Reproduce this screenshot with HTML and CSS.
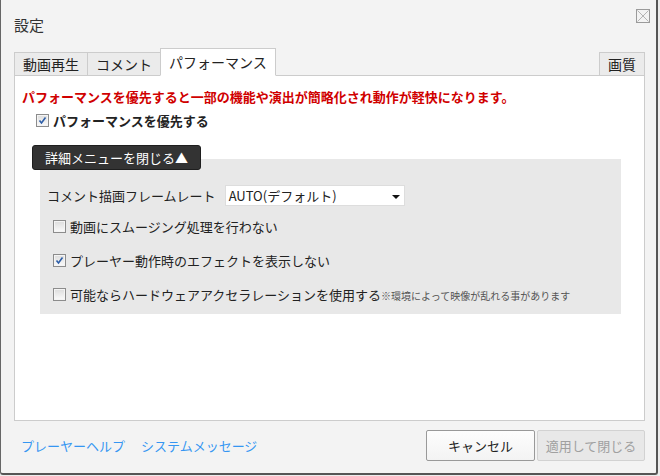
FILE: index.html
```html
<!DOCTYPE html>
<html lang="ja">
<head>
<meta charset="utf-8">
<link rel="stylesheet" href="styles.css">
</head>
<body>
<div class="dialog">
  <div class="header">
    <div class="title">設定</div>
    <div class="close">
      <svg width="14" height="14" viewBox="0 0 14 14"><rect x="0.5" y="0.5" width="13" height="13" fill="none" stroke="#9a9a9a"/><path d="M1.5 1.5 L12.5 12.5 M12.5 1.5 L1.5 12.5" stroke="#b4b4b4" stroke-width="1"/></svg>
    </div>
  </div>
  <div class="tabs">
    <div class="tab">動画再生</div>
    <div class="tab">コメント</div>
    <div class="tab active">パフォーマンス</div>
    <div class="tab right">画質</div>
  </div>
  <div class="panel">
    <div class="warn">パフォーマンスを優先すると一部の機能や演出が簡略化され動作が軽快になります。</div>
    <div class="row main-row">
      <span class="cb checked"><svg width="11" height="11" viewBox="0 0 11 11"><path d="M2.5 5.5 L4.5 8 L8.5 2.5" fill="none" stroke="#2d5ea8" stroke-width="1.6"/></svg></span>
      <span class="bold">パフォーマンスを優先する</span>
    </div>
    <div class="toggle">詳細メニューを閉じる▲</div>
    <div class="detail">
      <div class="select-row">
        <span>コメント描画フレームレート</span>
        <div class="select"><span>AUTO(デフォルト)</span><span class="arrow"></span></div>
      </div>
      <div class="row opt first">
        <span class="cb"></span><span>動画にスムージング処理を行わない</span>
      </div>
      <div class="row opt">
        <span class="cb checked"><svg width="11" height="11" viewBox="0 0 11 11"><path d="M2.5 5.5 L4.5 8 L8.5 2.5" fill="none" stroke="#2d5ea8" stroke-width="1.6"/></svg></span><span>プレーヤー動作時のエフェクトを表示しない</span>
      </div>
      <div class="row opt">
        <span class="cb"></span><span>可能ならハードウェアアクセラレーションを使用する</span><span class="note">※環境によって映像が乱れる事があります</span>
      </div>
    </div>
  </div>
  <div class="footer">
    <span class="link">プレーヤーヘルプ</span>
    <span class="link">システムメッセージ</span>
    <div class="buttons">
      <div class="btn cancel">キャンセル</div>
      <div class="btn apply">適用して閉じる</div>
    </div>
  </div>
</div>
</body>
</html>
```

FILE: styles.css
```css
html, body {
  margin: 0;
  padding: 0;
}
body {
  background: #ececec;
  font-family: "Noto Sans CJK JP", "Noto Sans", sans-serif;
  color: #222;
  font-size: 13px;
}
.dialog {
  box-sizing: border-box;
  width: 658px;
  height: 475px;
  background: #f3f3f3;
  border-left: 1px solid #666;
  border-right: 2px solid #555;
  border-bottom: 2px solid #555;
  border-radius: 0 0 3px 3px;
  padding: 0 11px 0 13px;
  display: flex;
  flex-direction: column;
}
.header {
  height: 48px;
  display: flex;
  justify-content: space-between;
  align-items: flex-start;
  margin-right: -5px;
}
.title {
  font-size: 15px;
  line-height: 22px;
  padding-top: 14px;
  color: #333;
}
.close {
  margin-top: 9px;
  width: 14px;
  height: 14px;
  line-height: 0;
}
.tabs {
  height: 28px;
  display: flex;
  align-items: flex-end;
  margin-bottom: -1px;
  position: relative;
  z-index: 1;
}
.tab {
  box-sizing: border-box;
  height: 24px;
  line-height: 22px;
  padding: 0 8px;
  font-size: 14px;
  background: #ebebeb;
  border: 1px solid #ccc;
  margin-left: -1px;
  color: #222;
}
.tab:first-child {
  margin-left: 0;
}
.tab.active {
  height: 28px;
  line-height: 27px;
  background: #fff;
  border-bottom-color: #fff;
}
.tab.right {
  margin-left: auto;
}
.panel {
  box-sizing: border-box;
  height: 346px;
  background: #fff;
  border: 1px solid #ccc;
  padding: 12px 0 0 7px;
  display: flex;
  flex-direction: column;
  align-items: flex-start;
}
.warn {
  color: #d00000;
  font-weight: bold;
  line-height: 18px;
}
.row {
  display: flex;
  align-items: center;
  height: 20px;
}
.main-row {
  margin-top: 4px;
  margin-left: 14px;
}
.bold {
  font-weight: bold;
}
.cb {
  box-sizing: border-box;
  width: 13px;
  height: 13px;
  border: 1px solid #8c8c8c;
  background: linear-gradient(#dcdcdc, #fbfbfb);
  box-shadow: inset 0 0 0 1px #f4f4f4;
  margin-right: 4px;
  display: flex;
  align-items: center;
  justify-content: center;
  flex: none;
}
.toggle {
  margin-top: 15px;
  margin-left: 10px;
  height: 25px;
  line-height: 24px;
  box-sizing: border-box;
  padding: 0 12px;
  background: #333;
  color: #fff;
  border: 1px solid #1e1e1e;
  border-radius: 3px;
  position: relative;
  z-index: 1;
}
.detail {
  margin-top: -11px;
  margin-left: 18px;
  width: 581px;
  height: 155px;
  box-sizing: border-box;
  background: #e8e8e8;
  padding: 26px 0 0 7px;
}
.select-row {
  display: flex;
  align-items: center;
  height: 21px;
}
.select {
  margin-left: 9px;
  width: 180px;
  height: 21px;
  box-sizing: border-box;
  background: #fff;
  border: 1px solid #ddd;
  display: flex;
  align-items: center;
  justify-content: space-between;
  padding: 0 4px 0 3px;
  font-family: "Noto Sans CJK JP", sans-serif;
}
.arrow {
  width: 0;
  height: 0;
  border-left: 4px solid transparent;
  border-right: 4px solid transparent;
  border-top: 4px solid #111;
  margin-top: 2px;
}
.opt {
  margin-top: 14px;
  margin-left: 6px;
}
.opt.first {
  margin-top: 10px;
}
.note {
  font-size: 10px;
  color: #555;
  margin-top: 3px;
}
.footer {
  display: flex;
  align-items: center;
  margin-top: 9px;
  padding-left: 7px;
}
.link {
  color: #3596f2;
  margin-right: 16px;
}
.buttons {
  margin-left: auto;
  display: flex;
  gap: 2px;
}
.btn {
  box-sizing: border-box;
  width: 109px;
  height: 31px;
  line-height: 29px;
  text-align: center;
  border-radius: 2px;
}
.cancel {
  background: linear-gradient(#fdfdfd, #f3f3f3);
  border: 1px solid #999;
  color: #222;
}
.apply {
  width: 108px;
  background: #e8e8e8;
  border: 1px solid #d2d2d2;
  color: #a0a0a0;
}
```
